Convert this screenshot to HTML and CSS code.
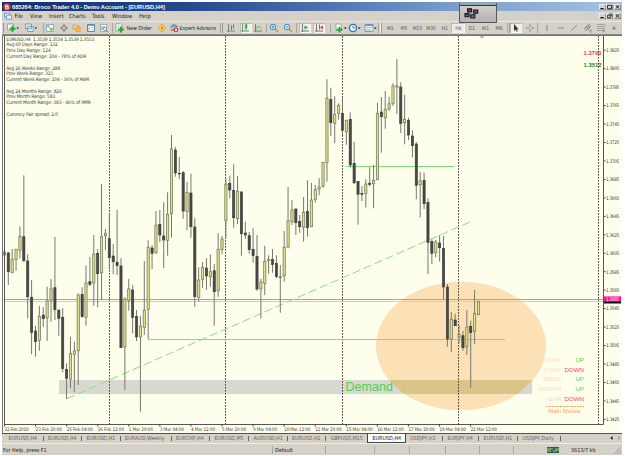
FILE: index.html
```html
<!DOCTYPE html>
<html lang="en">

<head>
  <meta charset="UTF-8">
  <title>685264: Broco Trader 4.0 - Demo Account - [EURUSD,H4]</title>
  <link rel="stylesheet" href="styles.css">
</head>

<body>
  <div class="window">
    <header class="titlebar">
      <svg class="logo" viewBox="0 0 8 8"><circle cx="4" cy="4" r="3.8" fill="#d3313c"/><path d="M2.6 1.8v4.4M2.6 2.2h2.2v1.6H2.8h2.6v2H2.6" fill="none" stroke="#fff" stroke-width=".8"/></svg>
      <span class="title">685264: Broco Trader 4.0 - Demo Account - [EURUSD,H4]</span>
      <div class="window-buttons">
        <svg viewBox="0 0 7 6"><path d="M1.5 4.5h3" stroke="#000"/></svg>
        <svg viewBox="0 0 7 6"><path d="M1.5 1.3h4v3.4h-4z" fill="none" stroke="#000" stroke-width=".8"/></svg>
        <svg class="close" viewBox="0 0 7 6"><path d="M2 1.2l3 3.4M5 1.2l-3 3.4" stroke="#000" stroke-width=".9"/></svg>
      </div>
    </header>

    <nav class="menubar">
      <svg class="menu-icon" viewBox="0 0 8 8"><path d="M.5 1h5v4h-5z" fill="#d8eaf7" stroke="#4a9ad0" stroke-width=".8"/><path d="M2.5 3.2h5v4h-5z" fill="#eaf5fb" stroke="#4a9ad0" stroke-width=".8"/></svg>
      <span>File</span><span>View</span><span>Insert</span><span>Charts</span><span>Tools</span><span>Window</span><span>Help</span>
      <div class="window-buttons">
        <svg viewBox="0 0 7 6"><path d="M1.5 4.5h3" stroke="#000"/></svg>
        <svg viewBox="0 0 7 6"><path d="M2.8 1h2.7v2.4M1.5 2.3h2.8v2.5h-2.8z" fill="none" stroke="#000" stroke-width=".7"/></svg>
        <svg class="close" viewBox="0 0 7 6"><path d="M2 1.2l3 3.4M5 1.2l-3 3.4" stroke="#000" stroke-width=".9"/></svg>
      </div>
    </nav>

    <div class="toolbar">
      <div class="tools file-tools">
        <i class="grip"></i>
        <svg viewBox="0 0 12 10"><path d="M.5 1h6v6h-6z" fill="#f4f8f4" stroke="#719a7a" stroke-width=".7"/><path d="M5.5 2.7v6M2.5 5.7h6" stroke="#20a83a" stroke-width="2"/><path d="M9.5 4.5h2.5l-1.25 1.5z"/></svg>
        <svg viewBox="0 0 12 10"><path d="M.5 1h6v4.7h-6zM2.5 3.5h5.7v5h-5.7z" fill="#e5f1fa" stroke="#5793bd" stroke-width=".8"/><path d="M9.5 4.5h2.5l-1.25 1.5z"/></svg>
      </div>
      <div class="tools panel-tools">
        <svg viewBox="0 0 10 10"><path d="M1.5 1.5h7v7h-7z" fill="#f4faf2" stroke="#63a4ca" stroke-width=".8"/><path d="M3 3l4 4M5 7h2V5" fill="none" stroke="#36a64c"/><circle cx="3.2" cy="3.2" r="1" fill="#e2762c"/></svg>
        <svg viewBox="0 0 10 10"><circle cx="5" cy="5" r="2.3" fill="none" stroke="#777" stroke-width=".7"/><path d="M5 1v3M5 6v3M1 5h3M6 5h3" stroke="#666" stroke-width=".8"/></svg>
        <svg viewBox="0 0 10 10"><path d="M1 2h3l1 1h2v3H1z" fill="#f9d66d" stroke="#bd9537" stroke-width=".6"/><path d="M6.3 3l1 2.1 2.2.3-1.6 1.4.4 2.2-2-1.1-2 1.1.4-2.2-1.6-1.4 2.2-.3z" fill="#ffb93c" stroke="#cf7d1b" stroke-width=".4"/></svg>
        <svg viewBox="0 0 10 10"><path d="M1.5 1.5h7v7h-7z" fill="#fff" stroke="#3981bd" stroke-width=".9"/><path d="M2 2.3h6" stroke="#4c95cf"/><path d="M3 4v3.5" stroke="#e88e36"/><path d="M5 4.5h2.5M5 6.5h2.5" stroke="#aaa" stroke-width=".6"/></svg>
        <svg viewBox="0 0 10 10"><path d="M1.5 1.5h6v7h-6z" fill="#fff" stroke="#779bb0" stroke-width=".7"/><path d="M3 3v4M5 3v3" stroke="#6f8f6b"/><circle cx="6" cy="6" r="1.7" fill="#d9eef7" stroke="#558" stroke-width=".5"/><path d="M7.2 7.2l2 2" stroke="#b88b2b"/></svg>
      </div>
      <div class="tools order-tools">
        <svg viewBox="0 0 10 10"><path d="M1 .8h4.5l1.5 1.5v5.5H1z" fill="#fff" stroke="#6e9b74" stroke-width=".7"/><path d="M2.3 3h3M2.3 4.5h2" stroke="#889" stroke-width=".5"/><path d="M6 3.5v6M3 6.5h6" stroke="#20a83a" stroke-width="2"/></svg>
        <span class="order-label">New Order</span>
        <svg class="alert" viewBox="0 0 10 10"><path d="M5 1l4 4-4 4-4-4z" fill="#ffd76a" stroke="#dd922b" stroke-width=".8"/><path d="M5 3v4M3.6 5h2.8" stroke="#b36316" stroke-width=".7"/></svg>
        <svg viewBox="0 0 10 10"><path d="M1.5 3.5q3.5-4 7 0l-1 4h-5z" fill="#58a8da" stroke="#3a789f" stroke-width=".5"/><path d="M0 4h9l-2 2H2z" fill="#e7b64d"/><circle cx="7" cy="6.8" r="2.4" fill="#db352a"/><path d="M6 5.8h2v2H6z" fill="#fff"/></svg>
        <span class="expert-label">Expert Advisors</span>
      </div>
      <div class="tools chart-tools">
        <i class="grip"></i>
        <svg viewBox="0 0 12 10"><path d="M2.5 1v7.5M1 8h8M5.5 2v5M7.5 1.5v4M4.5 5h1M7.5 3h1" fill="none" stroke="#557558" stroke-width=".8"/></svg>
        <svg class="pressed" viewBox="0 0 12 10"><path d="M2.5 1v7.5M1 8h8" stroke="#557558" stroke-width=".8"/><path d="M6 .8v6" stroke="#24843b"/><path d="M4.7 1.7h2.6v3.5H4.7z" fill="#2cc44d"/></svg>
        <svg viewBox="0 0 12 10"><path d="M2.5 1v7.5M1 8h8" stroke="#666" stroke-width=".8"/><path d="M3 6q2.2-5 5-.3" fill="none" stroke="#51945b" stroke-width=".7"/></svg>
      </div>
      <div class="tools zoom-tools">
        <svg viewBox="0 0 10 10"><path d="M6 6l3 3" stroke="#c69c34" stroke-width="1.6"/><circle cx="4" cy="4" r="2.8" fill="#d9effb" stroke="#318bc4"/><path d="M2.7 4h2.6M4 2.7v2.6" stroke="#266f9d" stroke-width=".8"/></svg>
        <svg viewBox="0 0 10 10"><path d="M6 6l3 3" stroke="#c69c34" stroke-width="1.6"/><circle cx="4" cy="4" r="2.8" fill="#d9effb" stroke="#318bc4"/><path d="M2.7 4h2.6" stroke="#266f9d" stroke-width=".8"/></svg>
      </div>
      <div class="tools scroll-tools">
        <svg class="pressed" viewBox="0 0 12 10"><path d="M3.5 1v7.5M2 8h8" stroke="#555" stroke-width=".8"/><path d="M5.5 2.5l3.5 2-3.5 2z" fill="#27a744"/></svg>
        <svg class="pressed" viewBox="0 0 12 10"><path d="M3.5 1v7.5M2 8h8M6.5 1.5v5" stroke="#555" stroke-width=".8"/><path d="M10 2.5v4l-3-2z" fill="#b84939"/></svg>
      </div>
      <div class="tools list-tools">
        <svg viewBox="0 0 14 10"><path d="M3 1h4l1.5 1.5v5H3z" fill="#fff" stroke="#759678" stroke-width=".7"/><path d="M6.5 3.5v6M3.5 6.5h6" stroke="#20a83a" stroke-width="1.8"/><path d="M11 4.5h2.6L12.3 6z"/></svg>
        <svg viewBox="0 0 14 10"><circle cx="5" cy="5" r="3.6" fill="#edf7ff" stroke="#2a74c2" stroke-width="1.4"/><path d="M5 2.8V5h2" fill="none" stroke="#345" stroke-width=".7"/><path d="M10 4.5h2.6L11.3 6z"/></svg>
        <svg viewBox="0 0 14 10"><path d="M1 1.5h8v7H1z" fill="#f4faff" stroke="#4588bd" stroke-width=".7"/><path d="M1 2.2h8" stroke="#4d92c8" stroke-width="1.3"/><path d="M2 5l2-1 2 1 2-1" fill="none" stroke="#bc6c50" stroke-width=".6"/><path d="M2 7h5" stroke="#3ca050" stroke-width=".7"/><path d="M10 4.5h2.6L11.3 6z"/></svg>
      </div>
      <div class="tools periods">
        <i class="grip"></i>
        <span>M1</span><span>M5</span><span>M15</span><span>M30</span><span>H1</span><span class="pressed">H4</span><span>D1</span><span>W1</span><span>MN</span>
      </div>
      <div class="tools draw-tools">
        <i class="grip"></i>
        <svg class="pressed" viewBox="0 0 12 10"><path d="M4 1v7l1.6-1.5 1 2.3 1-.5-1-2.1h2z" fill="#333"/></svg>
        <svg viewBox="0 0 12 10"><path d="M6 1v3M6 6v3M2 5h3M7 5h3" stroke="#777" stroke-width=".8"/></svg>
      </div>
      <div class="tools line-tools">
        <svg viewBox="0 0 12 10"><path d="M6 2v6" stroke="#777" stroke-width=".8"/></svg>
        <svg viewBox="0 0 12 10"><path d="M3 5h6" stroke="#777" stroke-width=".8"/></svg>
        <svg viewBox="0 0 12 10"><path d="M3 8l6-6" stroke="#777" stroke-width=".8"/></svg>
        <svg viewBox="0 0 12 10"><path d="M2 6l6-5M3 8l6-5M4 3l3 4M6 2l2 3" stroke="#666" stroke-width=".7"/><path d="M8 7h2M8 9h2M8 7v2" stroke="#666" stroke-width=".5"/></svg>
        <svg viewBox="0 0 12 10"><path d="M2 1.5h8M2 3.5h8M2 5.5h8M2 7.5h5" stroke="#888" stroke-width=".6"/><path d="M8 7h2M8 7v2.5M8 8h1.5" stroke="#555" stroke-width=".5"/></svg>
        <span>A</span>
      </div>
    </div>

    <div class="float-panel">
      <i></i>
      <svg viewBox="0 0 36 17"><g stroke="#16161c" stroke-width="1.1"><path d="M7.6 2.8h4v3.2h-4z" fill="#8f2b3c"/><path d="M13.7 4h4v3.2h-4z" fill="#57606b"/><path d="M5 7.6h4v3.2H5z" fill="#3b62ac"/><path d="M10.8 8.8h4V12h-4z" fill="#9c5b5f"/></g></svg>
    </div>

    <!-- bars, scales and labels are filled in by chart.js -->
    <svg class="chart" viewBox="2 35 620 398" width="620" height="398">
      <ellipse class="zone" cx="461" cy="346" rx="85" ry="64.3"/>
      <rect class="demand" x="59" y="380" width="473.2" height="14"/>
      <path class="demand-over" d="M389.3 380H532.2A85 64.3 0 0 1 517.5 394H404.5A85 64.3 0 0 1 389.3 380z"/>
      <g id="days"></g>
      <path class="bid" d="M5 299.5H603"/>
      <path class="ask" d="M5 301.5H603"/>
      <path class="level" d="M148.3 339.5H505M346 166.5H454.5"/>
      <path class="trend" d="M66.7 398.7L471 221.5"/>
      <g id="candles"></g>
      <path class="frame" d="M4.5 35V424.5H603.5V35"/>
      <path class="edge" d="M2.5 433V35.5H622"/>
      <path class="marker" d="M479.5 36.2h5l-2.5 2.2z"/>
      <text class="demand-text" x="345.5" y="390.7" textLength="47.5">Demand</text>
      <g class="info">
        <text x="6.3" y="41.3" textLength="88">EURUSD,H4  1.3539 1.3554 1.3539 1.3553</text>
        <text x="6.3" y="46.2" textLength="51.5">Avg 60 Days Range: 132</text>
        <text x="6.3" y="52.2" textLength="44.5">Prev Day Range: 124</text>
        <text x="6.3" y="58.1" textLength="80">Current Day Range: 104 - 78% of ADR</text>
        <text x="6.3" y="69.7" textLength="54">Avg 26 Weeks Range: 288</text>
        <text x="6.3" y="75.2" textLength="47">Prev Week Range: 315</text>
        <text x="6.3" y="81" textLength="83">Current Week Range: 104 - 36% of AWR</text>
        <text x="6.3" y="92.6" textLength="55.5">Avg 24 Months Range: 826</text>
        <text x="6.3" y="98.3" textLength="49">Prev Month Range: 583</text>
        <text x="6.3" y="104.2" textLength="84.5">Current Month Range: 383 - 46% of AMR</text>
        <text x="6.3" y="116" textLength="51.5">Currency Pair spread: 2.0</text>
      </g>
      <text class="quote down" x="583.5" y="54.8" textLength="18">1.3790</text>
      <text class="quote up" x="583.5" y="67" textLength="18">1.3512</text>
      <g class="moves">
        <text x="561.5" y="361.5">TODAY</text><text class="up" x="584" y="361.5">UP</text>
        <text x="561.5" y="371.5">Y-DAY</text><text class="down" x="584" y="371.5">DOWN</text>
        <text x="561.5" y="381">WEEK</text><text class="up" x="584" y="381">UP</text>
        <text x="561.5" y="390.5">MONTH</text><text class="up" x="584" y="390.5">UP</text>
        <text x="561.5" y="400.5">YEAR</text><text class="down" x="584" y="400.5">DOWN</text>
        <path d="M546 406.5H584"/>
        <text class="moves-title" x="580.5" y="412.7">Main Moves</text>
      </g>
      <g id="prices"></g>
      <rect x="604" y="300" width="17" height="3.5" fill="#111"/>
      <rect x="604" y="296.4" width="17" height="5.2" fill="#ff1493"/>
      <text class="price-now" x="606" y="301.2" textLength="13">1.3555</text>
      <g id="times"></g>
    </svg>

    <div class="tabs">
      <span>EURUSD,H4</span><span>EURUSD,H4</span><span>EURUSD,H1</span><span>EURAUD,Weekly</span><span>EURCHF,H4</span><span>EURUSD,M5</span><span>AUDUSD,H1</span><span>EURUSD,H1</span><span class="last">GBPUSD,M15</span><span class="active">EURUSD,H4</span><span>USDJPY,H1</span><span>EURJPY,H4</span><span>EURUSD,H1</span><span>USDJPY,Daily</span>
      <svg viewBox="0 0 14 6"><path d="M4.5 1v4l-2-2z"/><path d="M10.5 1v4l2-2z" fill="#999"/></svg>
    </div>

    <footer class="statusbar">
      <span>For Help, press F1</span><span>Default</span><span></span><span></span><span></span><span></span><span></span>
      <span class="traffic">
        <svg viewBox="0 0 12 6"><path d="M0 0h12v6H0z" fill="#225a6a"/><path d="M1 1v4M3 1v4M5 1v2M7 3v2M9 1v4M11 1v3" stroke="#b8d45c"/></svg>
        3613/7 kb
      </span>
      <svg class="resize" viewBox="0 0 8 8"><path d="M0 8l8-8M3 8l5-5M6 8l2-2" stroke="#888" stroke-width=".8"/></svg>
    </footer>
  </div>

  <script src="chart.js"></script>
</body>

</html>
```

FILE: styles.css
```css
body {
  margin: 0;
  background: #fff;
  font-family: "DejaVu Sans Condensed", "DejaVu Sans", "Liberation Sans", sans-serif;
  font-size: 5.5px;
  color: #222;
}

.window {
  position: relative;
  display: flex;
  flex-direction: column;
  width: 620px;
  height: 453px;
  margin: 2px 0 0 2px;
  background: #d5d1c9;
}

svg {
  display: block;
}

/* title and menu */
.titlebar {
  display: flex;
  align-items: center;
  height: 9px;
  padding-right: 1px;
  background: linear-gradient(90deg, #12306f 0%, #23488d 30%, #5378b4 55%, #7fa0cf 75%, #a3c2e3 100%);
}

.logo {
  width: 8px;
  height: 8px;
  margin-left: 1px;
}

.title {
  margin-left: 1px;
  color: #fff;
  font: bold 5.65px "Liberation Sans", Arial, sans-serif;
  white-space: nowrap;
}

.window-buttons {
  display: flex;
  margin-left: auto;
}

.window-buttons svg {
  width: 7px;
  height: 6px;
  background: #d5d1c9;
  box-shadow: inset .5px .5px #fff, inset -.5px -.5px #555;
}

.window-buttons .close {
  margin-left: 1px;
}

.menubar {
  display: flex;
  align-items: center;
  height: 10px;
  padding-right: 1px;
  font-size: 5.7px;
}

.menubar span {
  width: 19px;
}

.menubar span:nth-of-type(1) { width: 15.5px; }
.menubar span:nth-of-type(3) { width: 20px; }
.menubar span:nth-of-type(4) { width: 23px; }
.menubar span:nth-of-type(5) { width: 20px; }
.menubar span:nth-of-type(6) { width: 27px; }

.menu-icon {
  width: 8px;
  height: 8px;
  margin: 0 3px 0 1.5px;
}

/* toolbar */
.toolbar {
  display: flex;
  height: 14px;
  box-sizing: border-box;
  padding: 1px 0;
  border-top: 1px solid #e9e6df;
  border-bottom: 1px solid #8b8983;
}

.tools {
  display: flex;
  flex: none;
  align-items: center;
  box-sizing: border-box;
  border-right: 1px solid #aaa69e;
}

.tools svg {
  flex: none;
  width: 10px;
  height: 10px;
}

.grip {
  width: 1px;
  height: 10px;
  margin: 0 3px 0 1px;
  background: #f7f5f0;
  border-right: 1px solid #999;
}

.tools .pressed {
  background: #efede8;
  box-shadow: inset .5px .5px #8b8983, inset -.5px -.5px #fff;
}

.file-tools { width: 42px; }
.file-tools svg { width: 12px; margin-right: 6px; }
.panel-tools { width: 69px; padding-left: 1px; gap: 3.5px; }
.order-tools { width: 108px; padding-left: 2px; }
.chart-tools { width: 46px; }
.chart-tools svg { width: 12px; margin-right: 1.5px; }
.zoom-tools { width: 30px; padding-left: 2px; gap: 3.5px; }
.scroll-tools { width: 34px; padding-left: 2px; gap: 1.5px; }
.scroll-tools svg { width: 12px; }
.list-tools { width: 48px; }
.list-tools svg { width: 14px; margin-left: 1.5px; }
.periods { width: 129px; }
.periods .grip { margin-right: 1.5px; }
.draw-tools { width: 30px; }
.draw-tools .grip { margin-right: 0; }
.draw-tools svg { width: 12px; margin-right: 1.5px; }
.line-tools { flex: 1; padding-left: 3px; gap: 1.5px; border: 0; }
.line-tools svg { width: 12px; }

.order-label,
.expert-label {
  width: 30px;
  margin-left: 1.5px;
  font-size: 5.3px;
  letter-spacing: -.05px;
  white-space: nowrap;
}

.expert-label {
  width: 38px;
  margin-left: .5px;
}

.alert {
  margin: 0 2.5px 0 0;
}

.periods span {
  width: 13.6px;
  line-height: 10px;
  text-align: center;
  font-size: 5px;
  color: #555;
}

.line-tools span {
  width: 11px;
  text-align: center;
  color: #555;
}

/* small panel lying over the title and toolbar */
.float-panel {
  position: absolute;
  left: 457px;
  top: 1px;
  width: 38px;
  height: 20px;
  box-sizing: border-box;
  border: 1px solid #55575c;
  border-width: 0 1px 1px;
  background: linear-gradient(#d6d4d1, #b4b2b0);
}

.float-panel i {
  display: block;
  height: 2px;
  border-bottom: 1px solid #33363b;
  background: #9fa5ab;
}

.float-panel svg {
  width: 36px;
  height: 17px;
}

/* chart */
.chart {
  flex: none;
  background: #fdfeec;
  font-size: 4.9px;
}

.zone { fill: #fbe1b5; }
.demand { fill: #d9d8d0; }
.demand-over { fill: #dac589; }
.frame { fill: none; stroke: #555; }
.edge { fill: none; stroke: #77756f; }
.marker { fill: #aaa; }
.day { stroke: #4a443c; stroke-width: 1; stroke-dasharray: 1.7 1.3; }
.bid { stroke: #ff74ae; }
.ask { stroke: #cfcfc4; }
.level { stroke: #7be277; fill: none; }
.trend { stroke: #86e181; stroke-dasharray: 8.5 3.5; fill: none; }

.wick { stroke: #77786d; stroke-width: 1; }
.bull { fill: #e8e08e; stroke: #74805c; stroke-width: .8; }
.bear { fill: #4b4946; stroke: #383634; stroke-width: .6; }

.demand-text {
  font: 12.5px "Liberation Sans", Arial, sans-serif;
  fill: #45d34c;
}

.info { fill: #3c3c38; }
.info text { white-space: pre; }

.quote {
  font: bold 5.8px "Liberation Sans", Arial, sans-serif;
}

.quote.down { fill: #f8364c; }
.quote.up { fill: #237c2c; }

.moves {
  font: 6.2px "Liberation Sans", Arial, sans-serif;
  fill: #fbdcba;
  text-anchor: end;
}

.moves .up { fill: #4ada55; }
.moves .down { fill: #fb4860; }
.moves .moves-title { fill: #f9a45c; font-size: 6px; }
.moves path { stroke: #f3a862; stroke-dasharray: 2 .8; }

.tick { stroke: #444; }
.scale { fill: #444; font-size: 4.7px; }
.price-now { fill: #fff; font-size: 4.7px; }

/* chart tabs */
.tabs {
  display: grid;
  grid-template-columns: 41.5px 38.5px 38.5px 51px 38.5px 39px 38.5px 38.5px 41px 38.5px 37.5px 36px 39px 43px 1fr;
  align-items: start;
  flex: none;
  height: 10px;
  line-height: 8px;
  font-size: 5.4px;
  color: #666;
  white-space: nowrap;
  border-top: 1px solid #55534f;
  box-sizing: border-box;
}

.tabs span {
  padding-left: 4.5px;
  background: linear-gradient(#666, #666) right center / 1px 5px no-repeat;
}

.tabs span:first-child {
  padding-left: 6.5px;
}

.tabs .last {
  background: none;
}

.tabs .active {
  color: #111;
  background: #fff;
  border: 1px solid #444;
  border-top: 0;
}

.tabs svg {
  width: 14px;
  height: 6px;
  margin: 1px 0 0 auto;
}

/* status bar */
.statusbar {
  display: grid;
  grid-template-columns: 271px 53px 49px 35px 36px 34px 34px 100px 8px;
  align-items: center;
  flex: 1;
  padding-top: 1px;
  border-top: 1px solid #efede8;
  line-height: 8px;
  font-size: 5.4px;
}

.statusbar > span {
  height: 8px;
  padding-left: 2px;
  box-sizing: border-box;
  border-right: 1px solid #aaa69e;
}

.statusbar > span:first-child {
  padding-left: 1px;
}

.statusbar .traffic {
  display: flex;
  align-items: center;
  gap: 12px;
  padding-left: 33px;
  border: 0;
}

.traffic svg {
  width: 12px;
  height: 6px;
}

.resize {
  width: 7px;
  height: 7px;
}
```

FILE: chart.js
```js
// high, body top, body bottom, low, 1 = bull / 0 = bear
const bars = [
  [248, 252, 255, 258, 1], [252, 253, 271.7, 285, 0], [249, 259.3, 272.7, 272.7, 1], [249, 249.3, 259.3, 270.7, 1],
  [226.3, 236.3, 250.3, 258.3, 1], [175.3, 236.7, 260.7, 262.3, 0], [254.3, 261, 296.7, 318.3, 0], [280, 297.3, 332.3, 354.3, 0],
  [325.7, 331, 341.7, 356.7, 0], [306, 316.3, 340.3, 350.7, 1], [307, 315, 318.7, 326.7, 0], [286.7, 301, 317.7, 341, 1],
  [279, 289, 300.3, 321.7, 1], [237, 287.7, 309.7, 320, 0], [310, 310, 318.3, 335.7, 0], [308.3, 317.3, 368.7, 372.3, 0],
  [363.3, 369.3, 378.3, 399, 0], [336.7, 353.3, 379.3, 388.3, 1], [341.7, 351, 354.3, 392.3, 1], [293.3, 295, 350.7, 385, 1],
  [287.3, 294.3, 316.7, 317.7, 0], [265.3, 283, 317.3, 325.7, 1], [257, 281.7, 284.3, 286, 0], [235, 254, 283, 305.7, 1],
  [249, 253.3, 273.7, 307.3, 0], [184, 236.7, 272.7, 300, 1], [229, 233.3, 235.7, 250, 1], [213, 238.7, 257.7, 269.3, 0],
  [244, 256, 261.7, 274.3, 0], [210, 262.3, 265.7, 275, 0], [258.3, 266, 347.7, 348, 0], [297.3, 299, 346.7, 390, 1],
  [279, 289, 300.3, 310.7, 1], [285, 290, 317.3, 333.3, 0], [310, 316.3, 337, 341, 0], [316, 326, 337, 411.7, 1],
  [261, 310.3, 327.3, 335, 1], [240.3, 247.3, 309.3, 339.3, 1], [245, 248, 253.3, 269, 0], [211, 225.3, 252.3, 254, 1],
  [210, 224.3, 235, 242.3, 0], [202.3, 236, 240, 268, 0], [192.3, 214.3, 240.3, 255.7, 1], [135, 149, 213.7, 237.7, 1],
  [147, 150, 173, 176.7, 0], [157, 173.3, 174, 179, 0], [171, 172.7, 211, 218.7, 0], [182, 192.3, 211.7, 230.3, 1],
  [173.7, 193, 226.7, 237.7, 0], [218.3, 227, 296.7, 306.7, 0], [267.3, 280, 297.3, 301.7, 1], [262, 267.3, 279.3, 287.7, 1],
  [258.3, 268, 276, 290, 0], [254.3, 271.7, 276.7, 286.7, 1], [264, 270.7, 291.7, 325.7, 0], [233.3, 249.3, 290.7, 296.7, 1],
  [236, 239, 249.3, 254.3, 1], [178.3, 184.3, 220.7, 237.7, 1], [175.7, 183.3, 190, 198.3, 0], [164.3, 190.3, 217.7, 227.7, 0],
  [176, 191.3, 218.7, 224, 1], [191, 192, 233.7, 255.7, 0], [221.7, 233, 235, 239, 0], [232, 235.7, 249.7, 253.7, 0],
  [228.3, 249.3, 255.7, 262.7, 0], [235, 256.3, 289, 291, 0], [278.7, 282, 289, 318.3, 1], [245.7, 261.3, 283.3, 295, 1],
  [255.3, 259.7, 260.7, 273.7, 1], [249, 259.3, 264.7, 272.7, 0], [255.3, 263.3, 276.7, 278.3, 0], [265, 276.7, 277.7, 312.7, 1],
  [231, 247.3, 275.7, 281.7, 1], [187, 220.7, 247, 248.3, 1], [200, 210, 221.7, 225, 1], [208.5, 209, 222.7, 235, 0],
  [215, 221.3, 226.7, 232.7, 0], [197, 212.3, 227.3, 241.7, 1], [180.3, 211.3, 227.7, 236.7, 0], [183, 200, 226.7, 227, 1],
  [185, 189.7, 199.3, 202.7, 1], [178.3, 187, 189, 195.3, 1], [162, 162.3, 186, 187.7, 1], [79.3, 98.3, 162.7, 181.7, 1],
  [87.7, 99.3, 122.7, 136, 0], [96.3, 114.3, 123.3, 143.3, 1], [103.3, 105.3, 113.3, 119.7, 1], [96.7, 113.3, 130.3, 135, 0],
  [119.7, 120.3, 131.7, 144.7, 1], [112.3, 119.3, 165, 167.7, 0], [141.7, 163.3, 182.7, 184.3, 0], [181.3, 181.3, 194.3, 224.7, 0],
  [186, 193.3, 194.3, 201, 0], [179.3, 184, 193.3, 207.7, 1], [167.3, 183.3, 184.3, 186, 0], [165, 180.3, 183.7, 208.3, 1],
  [102.7, 113.3, 179.7, 179.7, 1], [97, 112, 116.7, 152.7, 0], [91, 109.3, 117.7, 128.7, 1], [96.7, 103.7, 108.7, 111, 1],
  [83.3, 86, 103.3, 106, 1], [59, 86, 87, 114, 1], [82.3, 87, 123.3, 133, 0], [94.7, 119.3, 122.7, 144.3, 1],
  [117.7, 120.3, 135, 140, 0], [130.3, 136, 145.7, 157.3, 0], [142, 144, 185.3, 199.3, 0], [172, 181, 184.7, 217.3, 1],
  [172.7, 180.3, 203.7, 209, 0], [198.3, 202.3, 242.3, 274, 0], [239.3, 241.3, 253.3, 264, 0], [240, 242, 252.7, 257.3, 1],
  [235, 243, 247.7, 261.7, 0], [236, 248.3, 287, 299, 0], [284, 287, 339, 346.7, 0], [311.7, 319.3, 339.3, 351.7, 1],
  [313.7, 320, 325.7, 326, 0], [325, 334.7, 337, 343, 1], [331, 335.7, 347.7, 350.7, 0], [310.3, 327, 346.7, 355, 1],
  [320.7, 326.3, 332.7, 387.7, 0], [290, 313.3, 331.3, 344.3, 1], [301, 301.3, 314.7, 314.7, 1]
];

const times = ['22 Feb 2010', '23 Feb 20:00', '25 Feb 04:00', '26 Feb 12:00', '1 Mar 20:00', '3 Mar 04:00',
  '4 Mar 12:00', '5 Mar 20:00', '9 Mar 04:00', '10 Mar 12:00', '11 Mar 20:00', '15 Mar 04:00', '16 Mar 12:00',
  '17 Mar 20:00', '19 Mar 04:00', '22 Mar 12:00'];

// Candles
let out = '';
bars.forEach(([high, top, bottom, low, bull], i) => {
  const x = 4.4 + i * 3.886;
  out += `<path class="wick" d="M${x} ${high}V${low}"/>`;
  out += `<rect class="${bull ? 'bull' : 'bear'}" x="${x - 1.1}" y="${top}" width="2.2" height="${bottom - top}"/>`;
});
document.getElementById('candles').innerHTML = out;

// Day separators
document.getElementById('days').innerHTML = [109.5, 225.5, 342.5, 458.5, 598.5]
  .map(x => `<path class="day" d="M${x} 36V424"/>`).join('');

// Price scale
out = '';
for (let i = 0; i <= 20; i++) {
  const y = 50.2 + i * 18.46;
  out += `<path class="tick" d="M604 ${y}h1.5"/>`;
  out += `<text class="scale" x="606" y="${y + 1.8}" textLength="13.3">${(1.3825 - i * 0.002).toFixed(4)}</text>`;
}
document.getElementById('prices').innerHTML = out;

// Time scale
out = '';
times.forEach((t, i) => {
  const x = 4.5 + i * 31.07;
  out += `<path class="tick" d="M${x} 424v2.5"/>`;
  out += `<text class="scale" x="${x}" y="431" textLength="${t.length * 2.2}">${t}</text>`;
});
document.getElementById('times').innerHTML = out;
```
